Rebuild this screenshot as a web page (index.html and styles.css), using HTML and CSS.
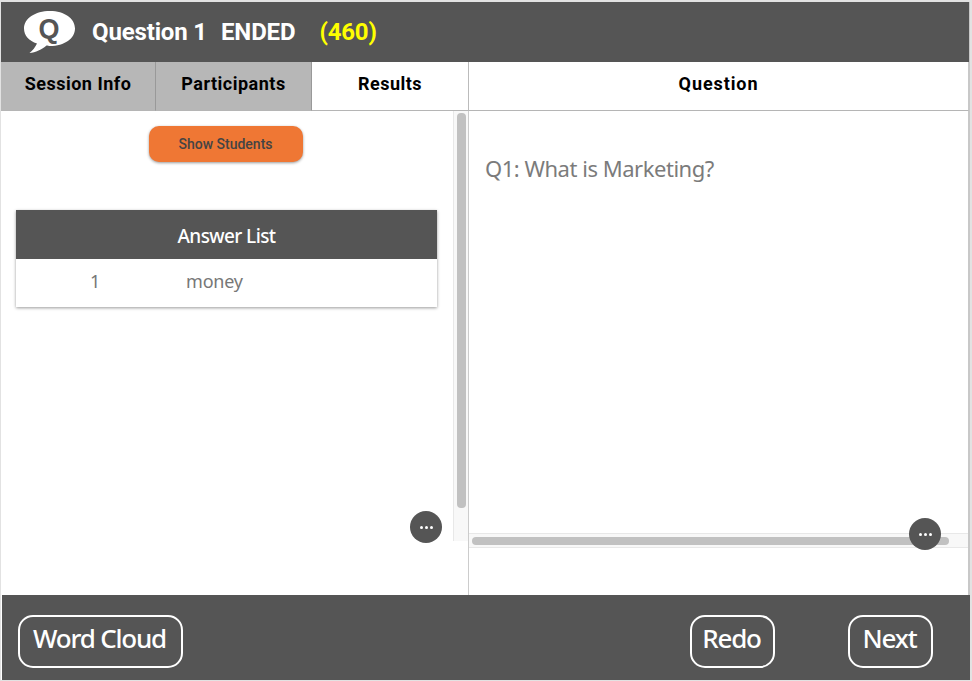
FILE: index.html
```html
<!DOCTYPE html>
<html lang="en">
<head>
<meta charset="utf-8">
<title>Question 1</title>
<link rel="stylesheet" href="styles.css">
</head>
<body>
<div class="app">
  <header class="topbar">
    <span class="logo">
      <svg width="54" height="44" viewBox="0 0 54 44" aria-hidden="true">
        <path fill="#fff" d="M27 0C12 0 1 7.500 1 17.500c0 7 5 12.500 13 15-1.500 3.500-4.500 7-7.500 9.500 6-.5 12.500-3.500 17-7.500 1 0 2.500 .5 3.500 .5 14.500 0 25-7.500 25-17.500S41.500 0 27 0z"/>
      </svg>
      <span class="logo-q">Q</span>
    </span>
    <span class="title">Question 1</span>
    <span class="title status">ENDED</span>
    <span class="title count">(460)</span>
  </header>
  <nav class="tabs">
    <div class="tab tab-off tab-session">Session Info</div>
    <div class="tab tab-off tab-part">Participants</div>
    <div class="tab tab-on tab-results">Results</div>
    <div class="tab tab-on tab-question">Question</div>
  </nav>
  <main class="panes">
    <section class="pane-left">
      <div class="left-scroll">
        <div class="left-content">
          <div class="btn-row"><button class="show-btn">Show Students</button></div>
          <div class="answers">
            <div class="answers-head">Answer List</div>
            <div class="answers-row"><span class="cell-num">1</span><span class="cell-text">money</span></div>
          </div>
        </div>
        <div class="vtrack"><div class="vthumb"></div></div>
      </div>
      <button class="dots dots-left" aria-label="More"><i></i><i></i><i></i></button>
    </section>
    <section class="pane-right">
      <div class="question">Q1: What is Marketing?</div>
      <div class="htrack"><div class="hthumb"></div></div>
      <div class="right-space"></div>
      <button class="dots dots-right" aria-label="More"><i></i><i></i><i></i></button>
    </section>
  </main>
  <footer class="bottombar">
    <button class="foot-btn btn-cloud">Word Cloud</button>
    <span class="foot-gap"></span>
    <button class="foot-btn btn-redo">Redo</button>
    <button class="foot-btn btn-next">Next</button>
  </footer>
</div>
</body>
</html>
```
FILE: styles.css
```css
* { box-sizing: border-box; }
html, body { margin: 0; height: 100%; background: #e2e2e2; overflow: hidden; }
body { padding: 2px 3px 1px 1px; font-family: "Noto Sans", sans-serif; }
.app { width: 968px; height: 678px; display: flex; flex-direction: column; background: #fff; box-shadow: 1px 0 0 #c8c8c8; }
.topbar { height: 60px; background: #555; display: flex; align-items: center; padding-left: 22px; font-family: Roboto, sans-serif; flex: none; }
.logo { position: relative; width: 54px; height: 44px; margin-right: 15px; margin-top: 2px; flex: none; }
.logo svg { display: block; }
.logo-q { position: absolute; left: 13px; top: 0; width: 26px; text-align: center; font: 700 27px/36px "Liberation Sans", sans-serif; color: #555; }
.title { color: #fff; font-size: 24px; font-weight: 700; letter-spacing: -.15px; line-height: 60px; white-space: nowrap; }
.status { margin-left: 14px; }
.count { margin-left: 24px; color: #ff0; }
.tabs { height: 49px; display: flex; flex: none; font-family: Roboto, sans-serif; }
.tab { display: flex; align-items: center; justify-content: center; padding-bottom: 5px; font-size: 18px; font-weight: 700; letter-spacing: .5px; color: #000; border-bottom: 1px solid #b5b5b5; }
.tab-off { background: #b7b7b7; border-right: 1px solid #999; }
.tab-session { width: 155px; }
.tab-part { width: 156px; }
.tab-results { width: 157px; border-right: 1px solid #bbb; background: #fff; }
.tab-question { flex: 1; background: #fff; border-right: 1px solid #c8c8c8; letter-spacing: .9px; }
.panes { flex: 1; display: flex; min-height: 0; }
.pane-left { position: relative; width: 468px; border-right: 1px solid #ccc; flex: none; }
.left-scroll { display: flex; height: 430px; }
.left-content { flex: 1; padding: 15px 16px 0 15px; }
.btn-row { display: flex; justify-content: center; padding-right: 2px; margin-bottom: 48px; }
.show-btn { width: 154px; height: 36px; border: 0; border-radius: 10px; background: #ef7734; color: #444; font: 500 14px Roboto, sans-serif; box-shadow: 0 1px 3px rgba(0,0,0,.4); padding: 0; }
.answers { width: 421px; background: #fff; box-shadow: 0 1px 3px rgba(0,0,0,.4); }
.answers-head { height: 49px; background: #555; color: #fff; font-size: 19px; font-weight: 500; letter-spacing: -.6px; line-height: 52px; text-align: center; }
.answers-row { height: 48px; display: flex; align-items: center; padding-bottom: 5px; color: #777; font-size: 18px; letter-spacing: -.2px; }
.cell-num { width: 170px; padding-right: 12px; text-align: center; }
.vtrack { width: 15px; background: #f8f8f8; border-left: 1px solid #e8e8e8; padding: 2px 2px 0 3px; flex: none; }
.vthumb { height: 395px; background: #c1c1c1; border-radius: 4px; }
.pane-right { position: relative; flex: 1; display: flex; flex-direction: column; min-width: 0; border-right: 1px solid #c8c8c8; }
.question { height: 422px; padding: 41px 16px 0; color: #7b7b7b; font-size: 22px; letter-spacing: -.47px; line-height: 33px; }
.htrack { height: 15px; background: #f8f8f8; border-top: 1px solid #e8e8e8; border-bottom: 1px solid #e8e8e8; padding: 3px 19px 0 3px; }
.hthumb { height: 8px; background: #c1c1c1; border-radius: 4px; }
.right-space { flex: 1; }
.dots { position: absolute; width: 32px; height: 32px; padding: 0; border: 0; border-radius: 50%; background: #555; display: flex; align-items: center; justify-content: center; gap: 2px; }
.dots i { width: 3px; height: 3px; border-radius: 50%; background: #fff; }
.dots-left { left: 409px; top: 400px; }
.dots-right { left: 440px; top: 407px; }
.bottombar { height: 85px; background: #555; display: flex; align-items: center; padding: 0 37px 0 16px; margin-right: -1px; margin-left: 1px; flex: none; }
.foot-btn { height: 53px; margin-top: 8px; padding: 0 2px 7px 0; border: 2px solid #fff; border-radius: 15px; background: transparent; color: #fff; font: 500 26px "Noto Sans", sans-serif; letter-spacing: -1.2px; }
.btn-cloud { width: 165px; }
.foot-gap { flex: 1; }
.btn-redo { width: 85px; margin-right: 73px; }
.btn-next { width: 85px; }
```
